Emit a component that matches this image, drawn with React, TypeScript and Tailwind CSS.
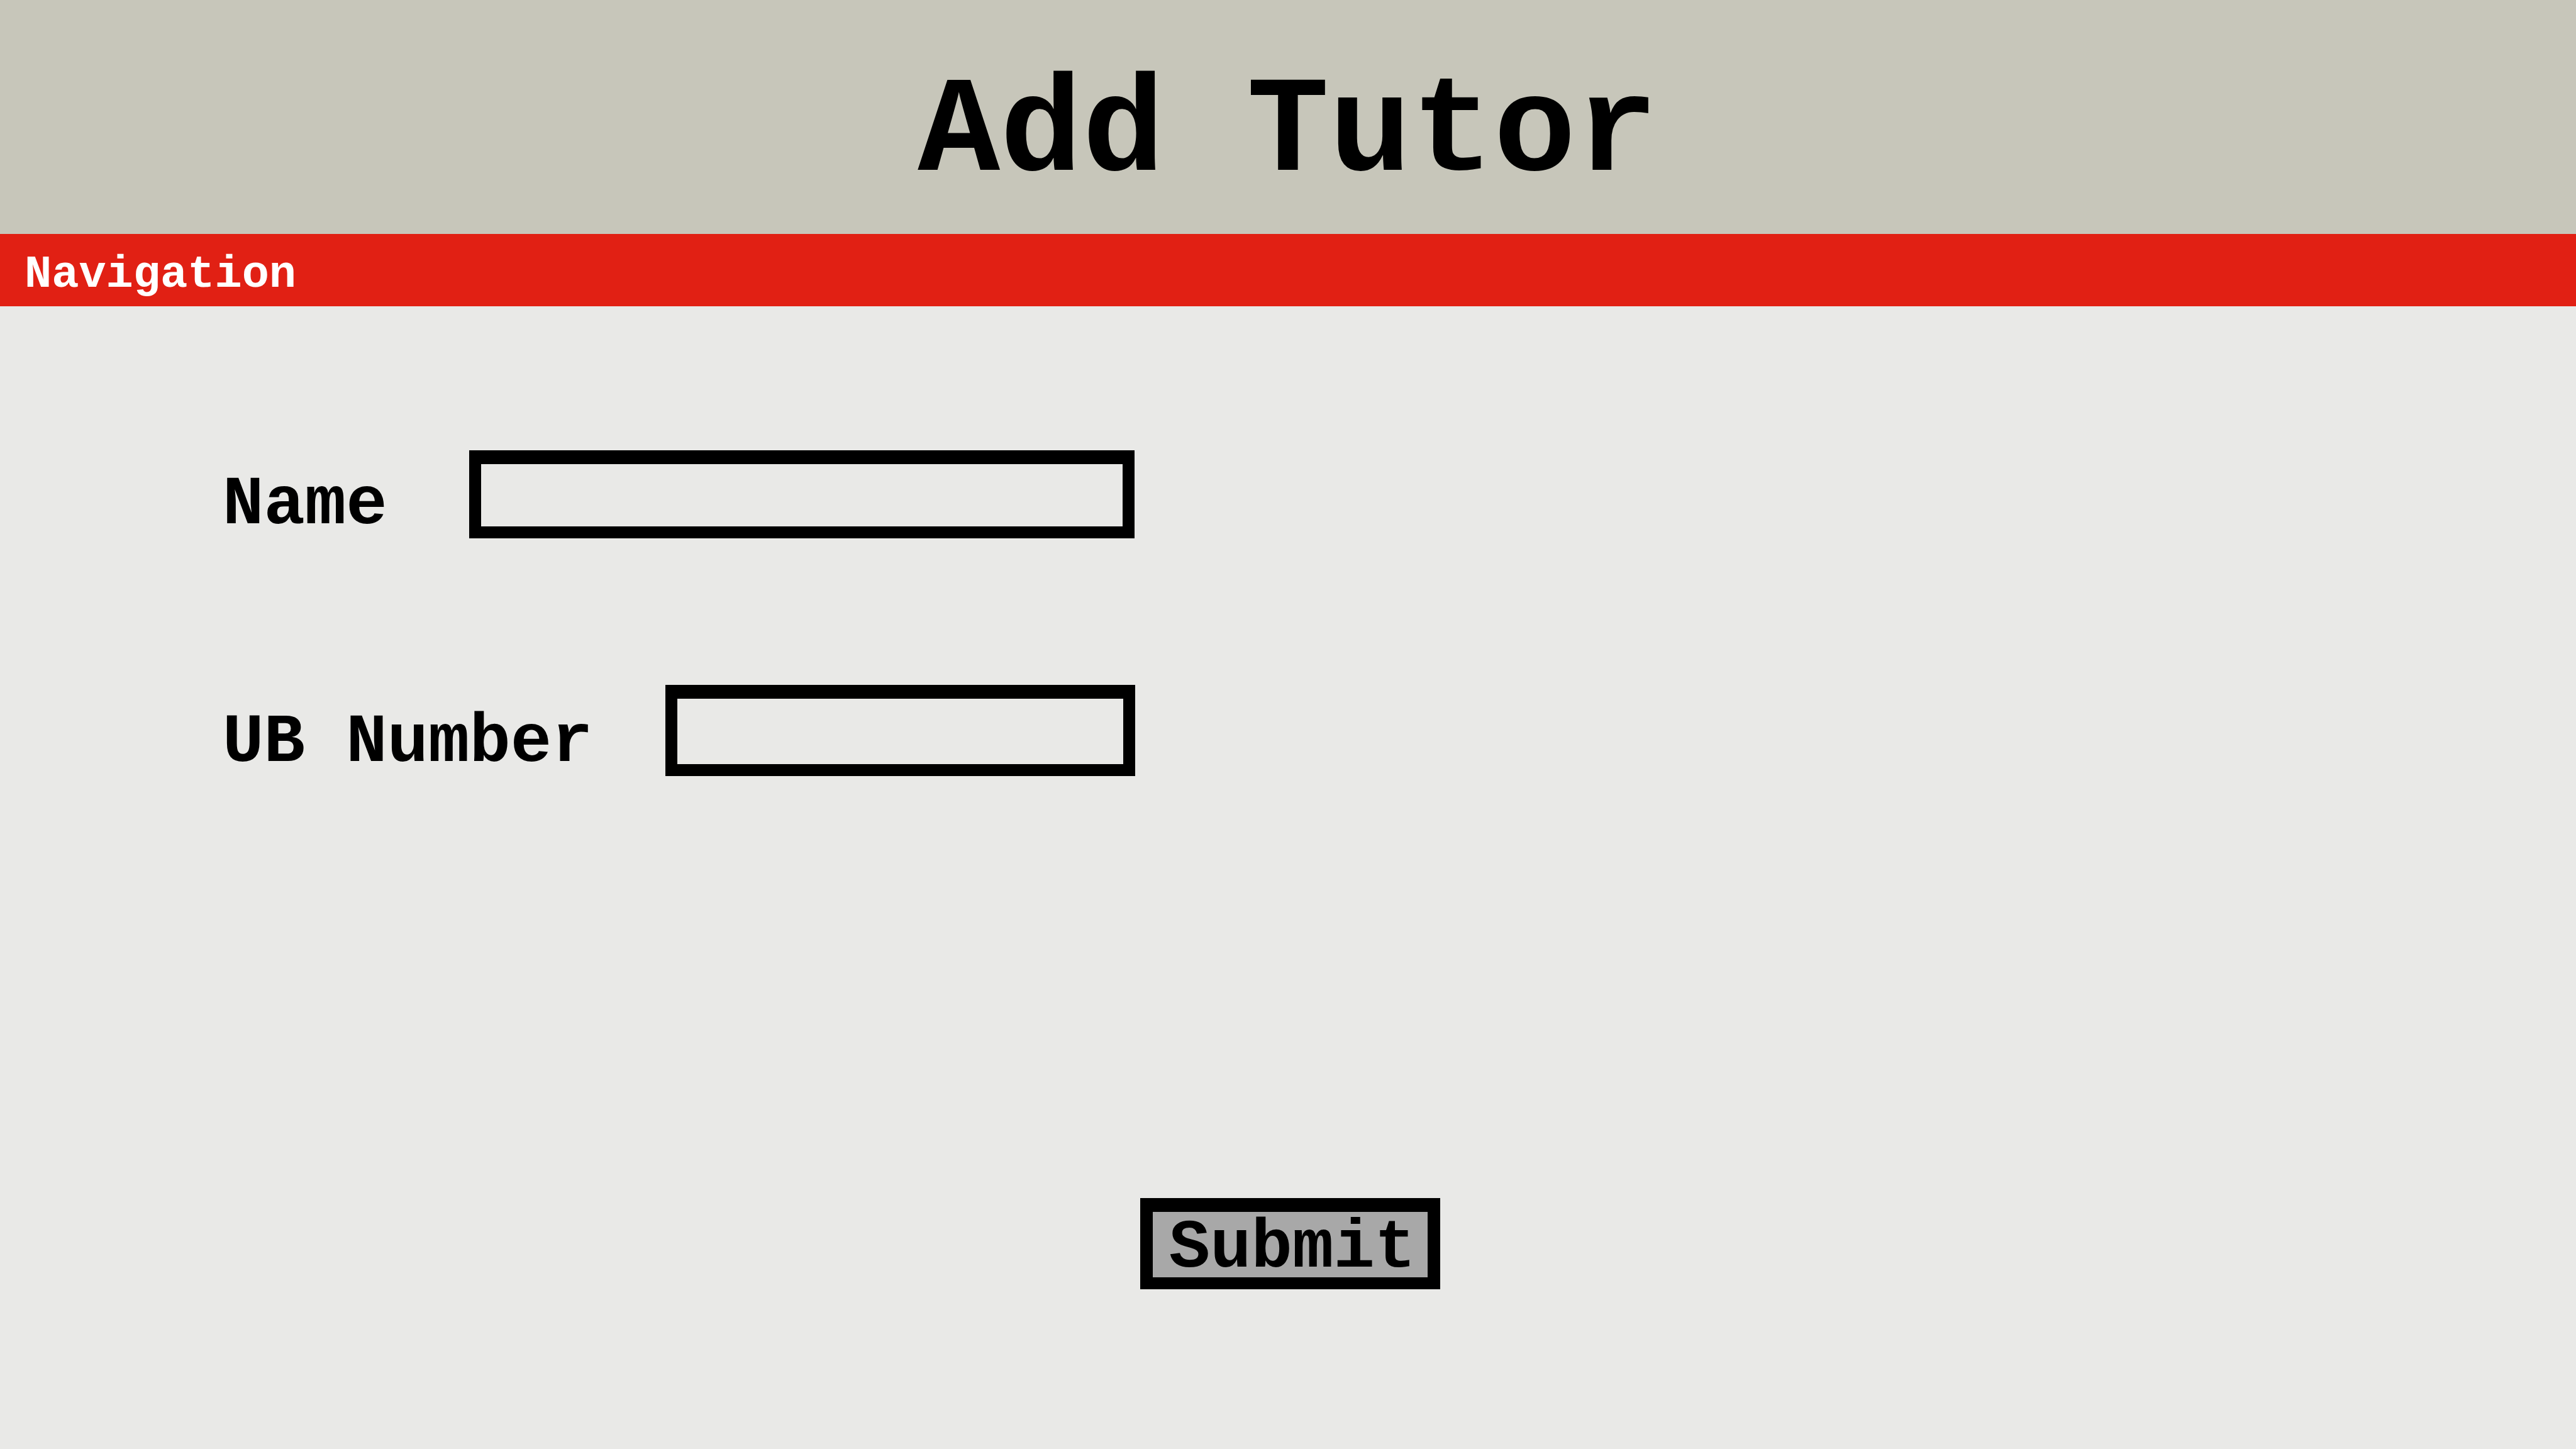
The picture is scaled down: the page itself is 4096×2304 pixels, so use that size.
type FieldProps = { id: string; label: string; labelClass: string; inputClass: string };

function Field({ id, label, labelClass, inputClass }: FieldProps) {
  return (
    <div className="flex items-end">
      <label htmlFor={id} className={`shrink-0 text-[109px] leading-[106px] ${labelClass}`}>
        {label}
      </label>
      <input
        id={id}
        name={id}
        type="text"
        className={`border-x-[19px] border-t-[22px] border-b-[19px] border-black px-6 text-[72px] outline-none ${inputClass}`}
      />
    </div>
  );
}

export default function App() {
  return (
    <div className="flex min-h-screen flex-col bg-[#e9e9e7] font-['Liberation_Mono',monospace] font-bold text-black">
      <header className="flex h-[372px] items-center justify-center bg-[#c7c6ba]">
        <h1 className="pt-[52px] text-[218px] leading-none">Add Tutor</h1>
      </header>
      <nav className="flex h-[115px] items-center bg-[#e12014] px-[39px]">
        <a href="#navigation" className="pt-[14px] text-[72px] leading-none text-white">
          Navigation
        </a>
      </nav>
      <main>
        <form className="flex flex-col pt-[229px] pr-[348px] pl-[354px]">
          <div className="flex flex-col gap-[233px]">
            <Field id="name" label="Name" labelClass="w-[392px]" inputClass="h-[140px] w-[1058px]" />
            <Field id="ub-number" label="UB Number" labelClass="w-[704px]" inputClass="h-[145px] w-[747px]" />
          </div>
          <button
            type="submit"
            className="mt-[671px] h-[145px] w-[477px] self-center border-x-[20px] border-t-[22px] border-b-[19px] border-black bg-[#a8a8a8] pt-[12px] pl-[8px] text-[109px] leading-[92px]"
          >
            Submit
          </button>
        </form>
      </main>
    </div>
  );
}
